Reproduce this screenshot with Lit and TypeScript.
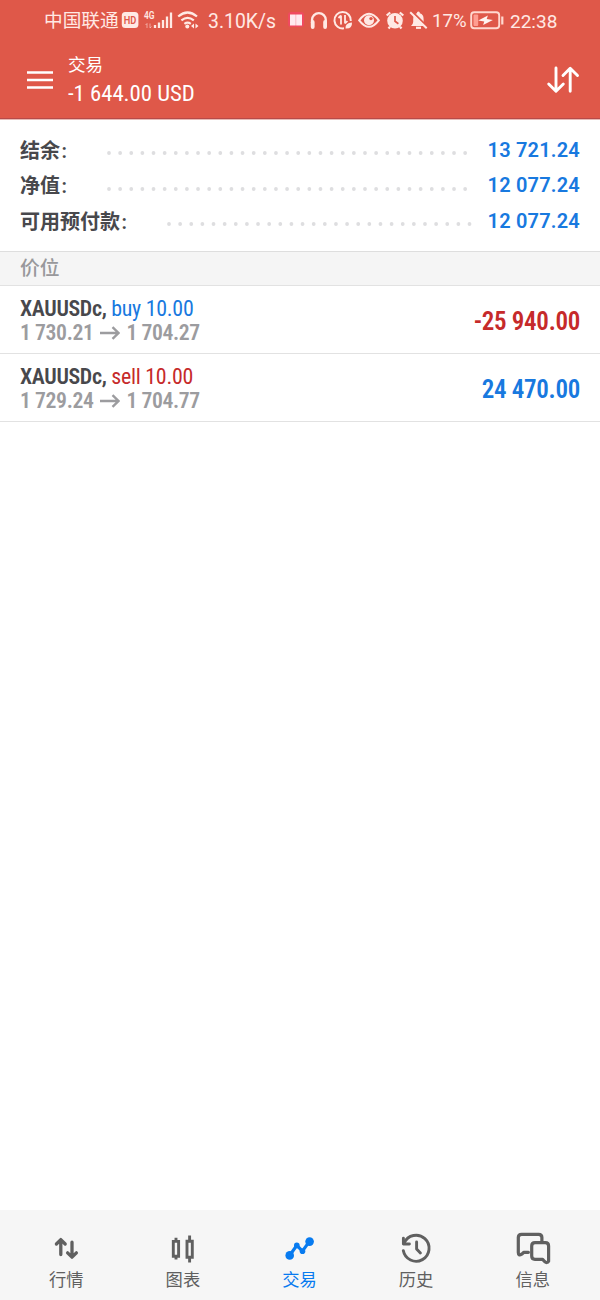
import { LitElement, html, css, svg } from "lit";
import { customElement } from "lit/decorators.js";

interface SummaryLine {
  label: string;
  value: string;
  wide: boolean;
}

interface Position {
  symbol: string;
  side: "buy" | "sell";
  volume: string;
  open: string;
  current: string;
  profit: string;
}

const summary: SummaryLine[] = [
  { label: "结余", value: "13 721.24", wide: false },
  { label: "净值", value: "12 077.24", wide: false },
  { label: "可用预付款", value: "12 077.24", wide: true },
];

const positions: Position[] = [
  { symbol: "XAUUSDc,", side: "buy", volume: "10.00", open: "1 730.21", current: "1 704.27", profit: "-25 940.00" },
  { symbol: "XAUUSDc,", side: "sell", volume: "10.00", open: "1 729.24", current: "1 704.77", profit: "24 470.00" },
];

const tabs = [
  {
    label: "行情",
    icon: svg`<g fill="none" stroke="currentColor" stroke-width="3.3" stroke-linecap="round" stroke-linejoin="round">
      <path d="M14.8 26.5V12M10.4 16l4.4-4.4 4.4 4.4"/><path d="M26 14.2v14.6M21.6 24.8l4.4 4.4 4.4-4.4"/></g>`,
  },
  {
    label: "图表",
    icon: svg`<g fill="none" stroke="currentColor" stroke-width="2.9">
      <path d="M10.3 13.4h5.3v14.8h-5.3zM13 9.8v3.6M13 28.2v3.4M24 13.2h5.3v16H24zM26.6 7.4v5.8M26.6 29.2v5.2"/></g>`,
  },
  {
    label: "交易",
    active: true,
    icon: svg`<path d="M10.6 27.5l7.2-10.2 5.6 5.8 6.9-9.5" fill="none" stroke="currentColor" stroke-width="3.2" stroke-linejoin="round"/>
      <g fill="currentColor"><circle cx="10.7" cy="27.4" r="4.3"/><circle cx="17.8" cy="17.4" r="2.8"/><circle cx="23.5" cy="23.2" r="2.8"/><circle cx="30.6" cy="13.6" r="4.3"/></g>`,
  },
  {
    label: "历史",
    icon: svg`<g fill="none" stroke="currentColor" stroke-width="2.9" stroke-linecap="round" stroke-linejoin="round">
      <path d="M8.2 15A13 13 0 1 1 7.3 22.6"/><path d="M7.4 10.3v5.7h6"/><path d="M20.6 14v7l3.8 4" stroke-width="2.9"/></g>`,
  },
  {
    label: "信息",
    icon: svg`<g fill="none" stroke="currentColor" stroke-width="3.2" stroke-linejoin="round" stroke-linecap="round" transform="translate(-1.6 -.4)">
      <path d="M17 24.7h-4.5l-2.2 1.9q-3.4 2-3.4-1.8V10q0-3.3 3.3-3.3h17q3.3 0 3.3 3.3v4"/>
      <path d="M23.6 15h10.3q3.3 0 3.3 3.3v15.3q-1.4 2.5-4 .3l-2-2.2h-7.6q-3.3 0-3.3-3.3V18.3q0-3.3 3.3-3.3z"/></g>`,
  },
];

@customElement("app-root")
export class AppRoot extends LitElement {
  static styles = css`
    :host {
      display: flex;
      flex-direction: column;
      height: 1300px;
      width: 600px;
      overflow: hidden;
      background: #fff;
      font-family: Roboto, "Noto Sans CJK SC", sans-serif;
      color: #48484c;
      white-space: nowrap;
    }
    svg { display: block; flex: none; }
    .condensed {
      font-family: "Roboto Condensed", Roboto, "Noto Sans CJK SC", sans-serif;
      font-stretch: 75%;
    }
    .top {
      height: 119px;
      flex: none;
      background: #df5849;
      border-bottom: 1px solid #b84a48;
      color: #ffe9e4;
      box-sizing: border-box;
      box-shadow: 0 1px #e8b9b5;
      margin-bottom: 1px;
    }
    .status {
      display: flex;
      height: 40px;
      padding-left: 44px;
      font-size: 19px;
    }
    .status span { line-height: 43px; flex: none; }
    .carrier { width: 76px; font-size: 18.7px; }
    .speed { width: 80px; padding-left: 8px; font-size: 19.4px; }
    .percent { width: 37px; font-size: 18.6px; }
    .clock { font-size: 19px; padding-left: 4px; }
    .bar { display: flex; height: 79px; align-items: center; color: #fff; }
    .menu { margin-left: 27px; }
    .heading { margin-left: 15px; flex: 1; padding-top: 4px; }
    .title { font-size: 17.6px; line-height: 24px; }
    .total { font-size: 22.8px; line-height: 33px; letter-spacing: -.05px; }
    .sort { margin-right: 20px; }
    .summary { height: 131px; flex: none; padding: 12px 20px 0; box-sizing: border-box; }
    .line { display: flex; align-items: center; height: 35.6px; }
    .label { width: 86px; font-size: 20px; line-height: 30px; margin-top: 2px; font-weight: 600; }
    .colon { margin-left: 1.5px; }
    .label.wide { width: 146px; }
    .dots { margin-top: 7px; }
    .value { flex: 1; text-align: right; font-size: 20px; font-weight: 600; color: #1879df; letter-spacing: .2px; }
    .section {
      height: 33px;
      line-height: 33px;
      flex: none;
      padding: 0 20px;
      background: #f5f5f5;
      border-top: 1px solid #dedede;
      border-bottom: 1px solid #e2e2e2;
      color: #98989b;
      font-size: 19.8px;
      font-weight: 500;
    }
    .position {
      display: flex;
      flex: none;
      justify-content: space-between;
      align-items: center;
      height: 67px;
      padding: 0 20px;
      border-bottom: 1px solid #e2e2e2;
    }
    .deals { padding-top: 3px; }
    .deal { font-size: 21.9px; line-height: 24.5px; letter-spacing: -.25px; }
    .symbol { font-weight: 600; letter-spacing: -.35px; }
    .prices { display: flex; align-items: center; font-size: 21.7px; line-height: 24.5px; font-weight: 600; color: #9c9c9f; letter-spacing: -.4px; }
    .arrow { margin: 0 6px 0 7px; }
    .buy { color: #1879df; }
    .sell { color: #c62a2a; }
    .profit { font-size: 25px; font-weight: 600; letter-spacing: -.3px; padding-top: 3px; }
    .space { flex: 1; }
    .tabs {
      display: flex;
      height: 90px;
      box-sizing: border-box;
      flex: none;
      padding: 18px 9px 0 8px;
      background: #f6f6f6;
      color: #606060;
    }
    .tab { flex: 1; display: flex; flex-direction: column; align-items: center; }
    .tab span { font-size: 17.3px; line-height: 25px; }
    .tab.active { color: #087bf0; }
  `;

  private dots(wide: boolean) {
    const width = wide ? 308 : 364;
    return html`<svg class="dots" width=${width} height="6">
      <line x1="3" y1="3" x2=${width - 4} y2="3" stroke="#dedee0" stroke-width="3.8" stroke-linecap="round" stroke-dasharray="0 11.13"/>
    </svg>`;
  }

  private statusIcons() {
    return html`<svg width="144" height="40" viewBox="288 0 144 40" fill="none" stroke="#ffe9e4" stroke-width="2">
      <rect x="288" y="12" width="16" height="15" rx="3" fill="#f04a60" stroke="none"/>
      <path d="M290 14.5h5.8v11H290zM296.1 14.5h5.9v11h-5.9z" fill="#ffeaf0" stroke="none"/>
      <path d="M312 23v-3a6.8 6.8 0 0 1 13.8 0v3" stroke-width="2.3"/>
      <path d="M312.7 22v5M325.1 22v5" stroke-width="3.8" stroke-linecap="round"/>
      <path d="M350.8 21a8.2 8.2 0 1 0-6.8 7.3"/>
      <path d="M341 15.5v9M338.5 18l2.5-2.5M345 15v8.5M347.4 21l-2.4 2.5" stroke-width="1.8"/>
      <path d="M345.5 28.5q-.5-5.5 6.5-6 .5 6.5-6.5 6z" fill="#ffe9e4" stroke="none"/>
      <path d="M359.2 20.3q9.8-13 19.6 0-9.8 13-19.6 0z"/>
      <circle cx="369" cy="20.3" r="5" fill="#ffe9e4" stroke="none"/><circle cx="371" cy="18.6" r="1.7" fill="#df5849" stroke="none"/>
      <circle cx="395" cy="20.8" r="7.8" fill="#ffe9e4" stroke="none"/>
      <path d="M395 16v5.3l3.4 2.4" stroke="#df5849" stroke-width="1.7"/>
      <path d="M386.7 15.5l3.5-3M403.3 15.5l-3.5-3M390 26.8l-1.5 1.8M400 26.8l1.5 1.8" stroke-width="2.3"/>
      <path d="M411 26q2.2-2 2.2-4v-3q0-4.6 3.7-5.7 0-1.7 1.5-1.7t1.5 1.7q3.7 1.1 3.7 5.7v3q0 2 2.2 4z" fill="#ffe9e4" stroke="none"/>
      <path d="M416 27.8h5" stroke-width="2.2"/><path d="M411.5 11l16.3 16.3" stroke="#df5849" stroke-width="2"/><path d="M410.2 12.2l16.5 16"/>
    </svg>`;
  }

  render() {
    return html`
      <header class="top">
        <div class="status">
          <span class="carrier">中国联通</span>
          <svg width="80" height="40" viewBox="120 0 80 40" fill="none" stroke="#ffe9e4">
            <rect x="121.8" y="12" width="16.6" height="16" rx="3.5" fill="#ffe9e4" stroke="none"/>
            <text x="123.8" y="24" font-size="10.5" font-weight="600" fill="#df5849" stroke="none" textLength="12.6" lengthAdjust="spacingAndGlyphs">HD</text>
            <text x="144" y="19" font-size="10.5" font-weight="600" fill="#ffe9e4" stroke="none" textLength="10.5" lengthAdjust="spacingAndGlyphs">4G</text>
            <path d="M147 28v-4.5l-1.5 1.5M150 23.5V28l1.5-1.5" stroke-width="1" opacity=".55"/>
            <path d="M155 28v-3M159 28v-5.5M163 28v-8M167 28V16.5M171 28V12.5" stroke-width="2.3"/>
            <path d="M178.2 16.5q9.4-8 18.8 0M181.4 20.3q6.2-5 12.4 0M184.4 23.8q3.2-2.2 6.4 0" stroke-width="2.2"/>
            <circle cx="187.3" cy="26.5" r="2" fill="#ffe9e4" stroke="none"/>
            <path d="M194 23.5v5l-3-2.5zM195.5 23.5v5l3-2.5z" fill="#ffe9e4" stroke="none"/>
          </svg>
          <span class="speed">3.10K/s</span>
          ${this.statusIcons()}
          <span class="percent">17%</span>
          <svg width="37" height="40" viewBox="469 0 37 40">
            <rect x="471.2" y="12.2" width="28" height="16" rx="3" fill="none" stroke="#ffd8cf" stroke-width="1.9"/>
            <rect x="473.5" y="14.5" width="4.7" height="11.5" rx="1" fill="#ff9d91"/>
            <path d="M478.2 20.5l9.7-5-1.2 3.5 6.2 1-9.8 5 1.2-3.6z" fill="#fff4f0"/>
            <path d="M502.3 16.5v8" stroke="#ffd8cf" stroke-width="2.2"/>
          </svg>
          <span class="clock">22:38</span>
        </div>
        <div class="bar">
          <svg class="menu" width="26" height="20"><path d="M0 2.5h26M0 10h26M0 17.5h26" stroke="currentColor" stroke-width="2.7"/></svg>
          <div class="heading">
            <div class="title">交易</div>
            <div class="total condensed">-1 644.00 USD</div>
          </div>
          <svg class="sort" width="34" height="30" viewBox="546 65 34 30" fill="none" stroke="currentColor" stroke-width="2.9" stroke-linecap="round" stroke-linejoin="round">
            <path d="M556 68v23M548.7 84l7.3 7.3 7.3-7.3M570.2 91.2V68.5M563 75.5l7.2-7.2 7.3 7.2"/>
          </svg>
        </div>
      </header>
      <section class="summary">
        ${summary.map((s) => html`<div class="line">
          <div class="label ${s.wide ? "wide" : ""}">${s.label}<span class="colon">:</span></div>${this.dots(s.wide)}<div class="value">${s.value}</div>
        </div>`)}
      </section>
      <div class="section">价位</div>
      ${positions.map((p) => html`<div class="position condensed">
        <div class="deals">
          <div class="deal"><span class="symbol">${p.symbol}</span> <span class=${p.side}>${p.side} ${p.volume}</span></div>
          <div class="prices"><span>${p.open}</span>
            <svg class="arrow" width="20" height="14"><path d="M0 7h18.5M12.5 1.2L18.5 7l-6 5.8" fill="none" stroke="currentColor" stroke-width="2.4"/></svg>
            <span>${p.current}</span></div>
        </div>
        <div class="profit ${p.profit.startsWith("-") ? "sell" : "buy"}">${p.profit}</div>
      </div>`)}
      <div class="space"></div>
      <nav class="tabs">
        ${tabs.map((t) => html`<div class="tab ${t.active ? "active" : ""}">
          <svg width="40" height="40">${t.icon}</svg><span>${t.label}</span>
        </div>`)}
      </nav>
    `;
  }
}
